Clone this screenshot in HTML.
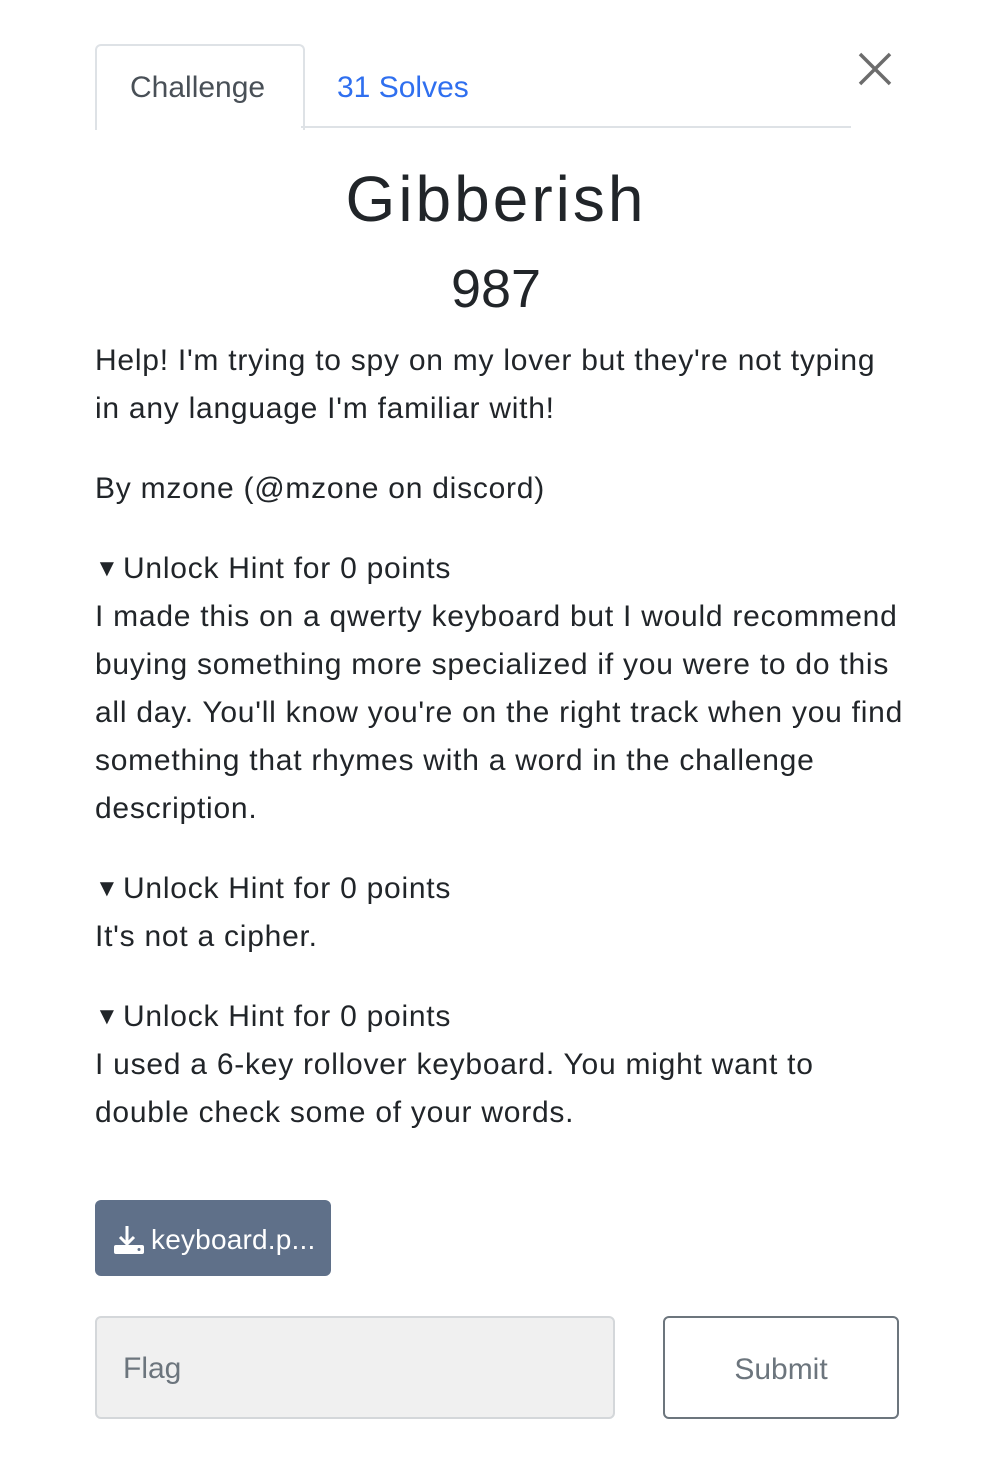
<!DOCTYPE html>
<html><head><meta charset="utf-8"><style>
body{margin:0;background:#fff;width:992px;height:1464px;font-family:"Liberation Sans",sans-serif;color:#212529;position:relative;overflow:hidden}
.abs{position:absolute;white-space:nowrap}
.t{font-size:30px;letter-spacing:0.75px;line-height:48px}
.tri{display:inline-block;width:28px;letter-spacing:0;font-size:24px;vertical-align:top}
</style></head><body>
<div class="abs" style="left:95px;top:44px;width:206px;height:84px;border:2px solid #dee2e6;border-bottom:none;border-radius:6px 6px 0 0;background:#fff"></div>
<div class="abs" style="left:301px;top:126px;width:550px;height:2px;background:#dee2e6"></div>
<div class="abs" style="left:130px;top:71px;font-size:30px;color:#495057;letter-spacing:0px">Challenge</div>
<div class="abs" style="left:337px;top:71px;font-size:30px;color:#2f6fef;letter-spacing:0px">31 Solves</div>
<svg class="abs" style="left:857px;top:51px" width="36" height="36"><path d="M3 3L33 33M33 3L3 33" stroke="#6c6c6c" stroke-width="3.5"/></svg>
<div class="abs" style="left:0;width:992px;text-align:center;top:162px;font-size:64px;letter-spacing:3px;color:#212529">Gibberish</div>
<div class="abs" style="left:0;width:992px;text-align:center;top:258px;font-size:54px;color:#212529">987</div>
<div class="abs t" style="left:95px;top:337px">Help! I'm trying to spy on my lover but they're not typing<br>in any language I'm familiar with!</div>
<div class="abs t" style="left:95px;top:465px">By mzone (@mzone on discord)</div>
<div class="abs t" style="left:95px;top:545px"><span class="tri">▼</span>Unlock Hint for 0 points<br>I made this on a qwerty keyboard but I would recommend<br>buying something more specialized if you were to do this<br>all day. You'll know you're on the right track when you find<br>something that rhymes with a word in the challenge<br>description.</div>
<div class="abs t" style="left:95px;top:865px"><span class="tri">▼</span>Unlock Hint for 0 points<br>It's not a cipher.</div>
<div class="abs t" style="left:95px;top:993px"><span class="tri">▼</span>Unlock Hint for 0 points<br>I used a 6-key rollover keyboard. You might want to<br>double check some of your words.</div>
<div class="abs" style="left:95px;top:1200px;width:236px;height:76px;background:#5f7089;border-radius:6px"></div>
<svg class="abs" style="left:112px;top:1224px" width="34" height="32"><path d="M15 2V20M8 13L15 20L22 13" stroke="#fff" stroke-width="3" fill="none"/><rect x="2" y="21" width="30" height="9" rx="2" fill="#fff"/><circle cx="27" cy="25.5" r="1.5" fill="#5f7089"/></svg>
<div class="abs" style="left:151px;top:1224px;font-size:28px;color:#fff;letter-spacing:0.2px">keyboard.p...</div>
<div class="abs" style="left:95px;top:1316px;width:516px;height:99px;background:#f0f0f0;border:2px solid #d4d7da;border-radius:6px"></div>
<div class="abs" style="left:123px;top:1352px;font-size:30px;color:#6c757d">Flag</div>
<div class="abs" style="left:663px;top:1316px;width:232px;height:99px;border:2px solid #6c757d;border-radius:6px;text-align:center;line-height:103px;font-size:30px;color:#6c757d">Submit</div>
</body></html>
